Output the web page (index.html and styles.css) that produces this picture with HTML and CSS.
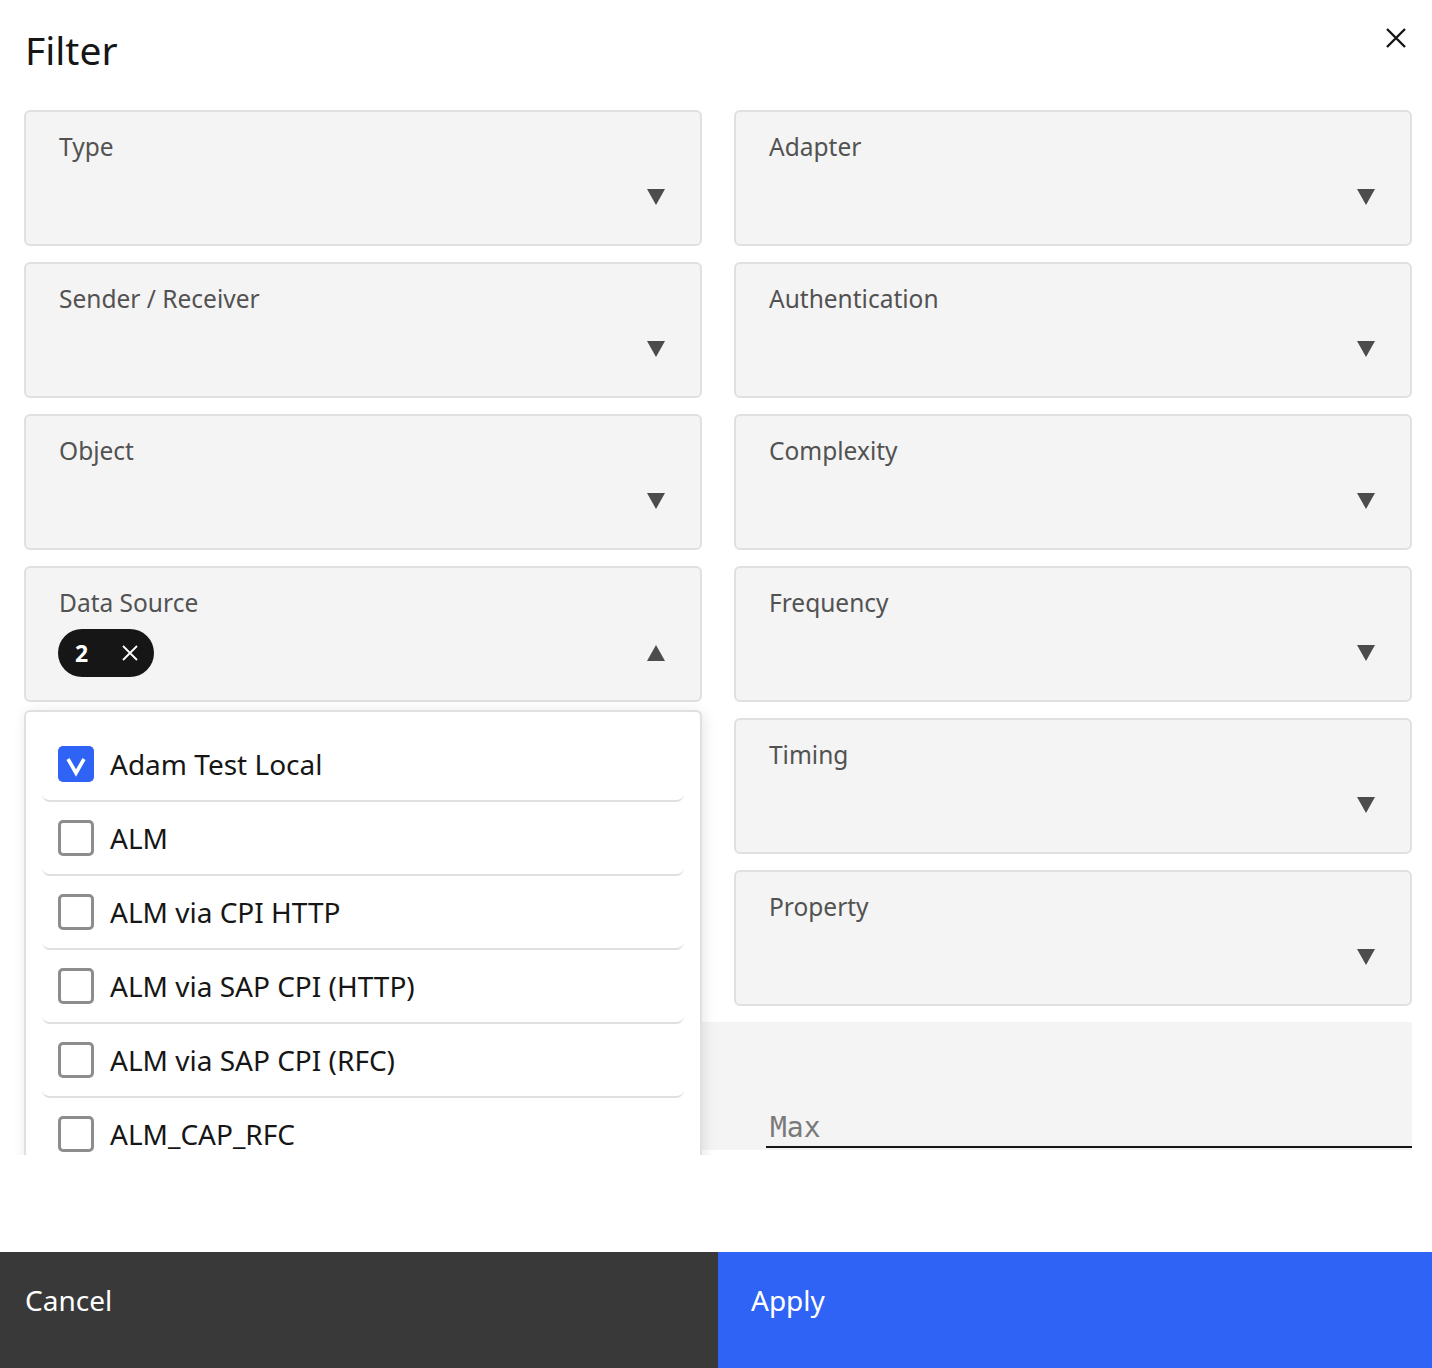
FILE: index.html
```html
<!DOCTYPE html>
<html lang="en">
<head>
  <meta charset="UTF-8">
  <meta name="viewport" content="width=device-width, initial-scale=1.0">
  <title>Filter</title>
  <link rel="stylesheet" href="styles.css">
</head>
<body>

  <div class="modal">

    <!-- Cabecera -->
    <header class="modal-head">
      <h1>Filter</h1>
      <button class="close" aria-label="Close">
        <svg width="24" height="24" viewBox="0 0 24 24"><path d="M3 3 L21 21 M21 3 L3 21" stroke="#161616" stroke-width="2.4" fill="none"/></svg>
      </button>
    </header>

    <!-- Campos -->
    <div class="modal-body">
      <div class="grid">

        <div class="field">
          <span class="label">Type</span>
          <div class="value"><span></span><svg class="caret" viewBox="0 0 18 16"><polygon points="0,0 18,0 9,16"/></svg></div>
        </div>
        <div class="field">
          <span class="label">Adapter</span>
          <div class="value"><span></span><svg class="caret" viewBox="0 0 18 16"><polygon points="0,0 18,0 9,16"/></svg></div>
        </div>

        <div class="field">
          <span class="label">Sender / Receiver</span>
          <div class="value"><span></span><svg class="caret" viewBox="0 0 18 16"><polygon points="0,0 18,0 9,16"/></svg></div>
        </div>
        <div class="field">
          <span class="label">Authentication</span>
          <div class="value"><span></span><svg class="caret" viewBox="0 0 18 16"><polygon points="0,0 18,0 9,16"/></svg></div>
        </div>

        <div class="field">
          <span class="label">Object</span>
          <div class="value"><span></span><svg class="caret" viewBox="0 0 18 16"><polygon points="0,0 18,0 9,16"/></svg></div>
        </div>
        <div class="field">
          <span class="label">Complexity</span>
          <div class="value"><span></span><svg class="caret" viewBox="0 0 18 16"><polygon points="0,0 18,0 9,16"/></svg></div>
        </div>

        <div class="field open">
          <span class="label">Data Source</span>
          <div class="value">
            <span class="tag"><b>2</b>
              <svg width="16" height="16" viewBox="0 0 16 16"><path d="M1 1 L15 15 M15 1 L1 15" stroke="#fff" stroke-width="1.8" fill="none"/></svg>
            </span>
            <svg class="caret" viewBox="0 0 18 16"><polygon points="0,16 18,16 9,0"/></svg>
          </div>

          <!-- Lista desplegada -->
          <ul class="menu">
            <li class="checked"><span class="box"><svg width="36" height="36" viewBox="0 0 36 36"><polyline points="10,13 18,27 26,13" stroke="#fff" stroke-width="3.6" fill="none"/></svg></span>Adam Test Local</li>
            <li><span class="box"></span>ALM</li>
            <li><span class="box"></span>ALM via CPI HTTP</li>
            <li><span class="box"></span>ALM via SAP CPI (HTTP)</li>
            <li><span class="box"></span>ALM via SAP CPI (RFC)</li>
            <li><span class="box"></span>ALM_CAP_RFC</li>
          </ul>
        </div>
        <div class="field">
          <span class="label">Frequency</span>
          <div class="value"><span></span><svg class="caret" viewBox="0 0 18 16"><polygon points="0,0 18,0 9,16"/></svg></div>
        </div>

        <div class="field right">
          <span class="label">Timing</span>
          <div class="value"><span></span><svg class="caret" viewBox="0 0 18 16"><polygon points="0,0 18,0 9,16"/></svg></div>
        </div>

        <div class="field right">
          <span class="label">Property</span>
          <div class="value"><span></span><svg class="caret" viewBox="0 0 18 16"><polygon points="0,0 18,0 9,16"/></svg></div>
        </div>

        <div class="range">
          <div class="range-cell"><input type="text" placeholder="Min"></div>
          <div class="range-cell"><input type="text" placeholder="Max"></div>
        </div>

      </div>
    </div>

    <!-- Botones -->
    <footer class="modal-foot">
      <button class="btn cancel">Cancel</button>
      <button class="btn apply">Apply</button>
    </footer>

  </div>

</body>
</html>
```

FILE: styles.css
```css
* { margin: 0; padding: 0; box-sizing: border-box; }
body { background: #fff; color: #161616; font-family: "Noto Sans", "Open Sans", sans-serif; }

.modal {
  height: 100vh;
  display: flex;
  flex-direction: column;
}

.modal-head {
  height: 110px;
  display: flex;
  justify-content: space-between;
  align-items: flex-start;
  padding: 25px 24px 0 25px;
}

.modal-head h1 {
  font-size: 39px;
  font-weight: 400;
  line-height: 50px;
}

.close {
  background: none;
  border: none;
  width: 24px;
  height: 24px;
  margin-top: 1px;
}

.modal-body {
  height: 1045px;
  overflow: hidden;
  padding: 0 20px 0 24px;
}

.grid {
  display: grid;
  grid-template-columns: 1fr 1fr;
  column-gap: 32px;
  row-gap: 16px;
}

.field {
  position: relative;
  height: 136px;
  background: #f4f4f4;
  border: 2px solid #e0e0e0;
  border-radius: 6px;
  padding: 19px 35px 0 33px;
  display: flex;
  flex-direction: column;
}

.field.right { grid-column: 2; }
.field.open { z-index: 2; }

.label {
  font-size: 24.5px;
  line-height: 32px;
  color: #525252;
}

.value {
  height: 48px;
  margin-top: 10px;
  display: flex;
  align-items: center;
  justify-content: space-between;
}

.caret {
  width: 18px;
  height: 16px;
  fill: #4c4c4c;
}

.tag {
  height: 48px;
  width: 96px;
  margin-left: -1px;
  border-radius: 24px;
  background: #161616;
  color: #fff;
  display: flex;
  align-items: center;
  justify-content: space-between;
  padding: 0 16px 0 17px;
}

.tag b { font-size: 23px; font-weight: 700; }

.menu {
  position: absolute;
  top: calc(100% + 10px);
  left: -2px;
  right: -2px;
  height: 470px;
  overflow: hidden;
  list-style: none;
  background: #fff;
  border: 2px solid #e0e0e0;
  border-radius: 6px;
  box-shadow: 2px 2px 14px rgba(0,0,0,0.10);
  padding: 16px 16px 0;
}

.menu li {
  height: 74px;
  display: flex;
  align-items: center;
  gap: 16px;
  padding-left: 16px;
  font-size: 28px;
  color: #161616;
  border-bottom: 2px solid #e0e0e0;
  border-radius: 0 0 8px 8px;
}

.box {
  width: 36px;
  height: 36px;
  flex-shrink: 0;
  border: 3px solid #8d8d8d;
  border-radius: 5px;
  background: #fff;
}

.menu li.checked .box {
  border: none;
  background: #2f63f5;
}

.box svg { display: block; }

.range {
  grid-column: 1 / -1;
  height: 128px;
  background: #f4f4f4;
  display: grid;
  grid-template-columns: 1fr 1fr;
  column-gap: 32px;
  align-items: end;
  padding-bottom: 2px;
}

.range-cell { padding-left: 32px; }

.range input {
  width: 100%;
  height: 48px;
  border: none;
  border-bottom: 2px solid #161616;
  background: transparent;
  font-family: "DejaVu Sans Mono", "Liberation Mono", monospace;
  font-size: 28px;
  padding: 8px 3px 0 4px;
  outline: none;
}

.range input::placeholder { color: #7a7a7a; }

.modal-foot {
  margin-top: auto;
  height: 116px;
  display: grid;
  grid-template-columns: 718px 1fr;
}

.btn {
  border: none;
  color: #fff;
  font-family: inherit;
  font-size: 28px;
  line-height: 36px;
  text-align: left;
  display: flex;
  align-items: flex-start;
  padding-top: 30px;
}

.cancel { background: #393939; padding-left: 25px; }
.apply { background: #2f63f5; padding-left: 33px; }
```
